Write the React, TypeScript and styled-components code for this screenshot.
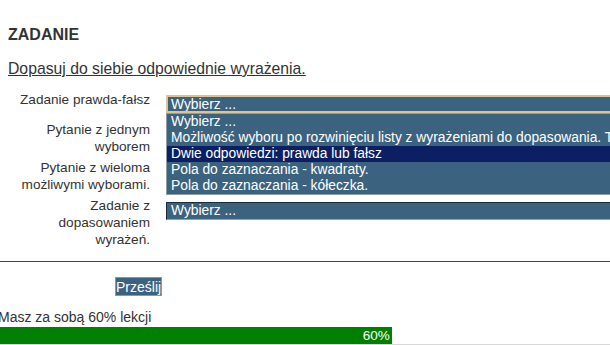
import React from "react";
import styled, { createGlobalStyle } from "styled-components";

const GlobalStyle = createGlobalStyle`
  html, body {
    margin: 0;
    padding: 0;
    background: #ffffff;
    overflow: hidden;
  }
  body {
    font-family: "Liberation Sans", Arial, sans-serif;
    color: #333333;
  }
`;

const Page = styled.div`
  width: 610px;
  padding: 26px 0 0 8px;
  box-sizing: border-box;
`;

const Title = styled.h3`
  margin: 0;
  font-size: 16px;
  line-height: 18px;
  font-weight: bold;
  color: #333333;
`;

const Instruction = styled.p`
  margin: 16px 0 0 0;
  font-size: 15.75px;
  line-height: 18px;
  text-decoration: underline;
  color: #333333;
`;

const Form = styled.div`
  margin-top: 13px;
  display: flex;
  flex-direction: column;
  gap: 4px;
`;

const Row = styled.div`
  display: grid;
  grid-template-columns: 142px 1fr;
  column-gap: 16px;
  align-items: start;
`;

const Label = styled.div`
  text-align: right;
  font-size: 13.6px;
  line-height: 17px;
  color: #333333;
`;

const SelectWrap = styled.div<{ $top: number }>`
  position: relative;
  margin-top: ${(p) => p.$top}px;
  margin-bottom: 4px;
  width: 470px;
`;

const SelectBox = styled.div<{ $focused?: boolean }>`
  height: 18px;
  box-sizing: border-box;
  background: #3b6380;
  color: #ffffff;
  font-size: 13.8px;
  line-height: 15px;
  white-space: nowrap;
  overflow: hidden;
  padding-left: ${(p) => (p.$focused ? 3 : 4)}px;
  border-style: solid;
  border-width: ${(p) => (p.$focused ? 2 : 1)}px;
  border-color: ${(p) =>
    p.$focused ? "#e0c28c" : "#1c2b36 #8fa1ae #8fa1ae #1c2b36"};
`;

const ListBox = styled.div`
  position: absolute;
  left: 0;
  top: 100%;
  width: 470px;
  box-sizing: border-box;
  background: #3b6380;
  border: 1px solid #8d9ca7;
  z-index: 2;
`;

const Option = styled.div<{ $selected?: boolean }>`
  height: 16px;
  line-height: 16px;
  padding-left: 4px;
  font-size: 13.8px;
  color: #ffffff;
  white-space: nowrap;
  background: ${(p) => (p.$selected ? "#0b1f62" : "transparent")};
`;

const Divider = styled.div`
  margin: 13px 0 0 -8px;
  width: 610px;
  height: 1px;
  background: #444444;
`;

const SubmitButton = styled.button`
  display: block;
  margin: 15px 0 0 107px;
  height: 19px;
  width: 47px;
  padding: 0;
  box-sizing: border-box;
  background: #3b6380;
  color: #ffffff;
  border: 1px solid #8a979f;
  font-family: "Liberation Sans", Arial, sans-serif;
  font-size: 14px;
  line-height: 16px;
  cursor: pointer;
`;

const ProgressText = styled.div`
  margin: 13px 0 0 -10px;
  font-size: 14px;
  line-height: 17px;
  color: #333333;
  white-space: nowrap;
`;

const Track = styled.div`
  margin: 1px 0 0 -8px;
  width: 653px;
  height: 18px;
  box-sizing: border-box;
  border-bottom: 1px solid #d8d8d8;
`;

const Fill = styled.div`
  height: 17px;
  background: #008000;
  color: #ffffff;
  font-size: 13.5px;
  line-height: 17px;
  text-align: right;
  padding-right: 2px;
  box-sizing: border-box;
`;

const options = [
  "Wybierz ...",
  "Możliwość wyboru po rozwinięciu listy z wyrażeniami do dopasowania. Tak",
  "Dwie odpowiedzi: prawda lub fałsz",
  "Pola do zaznaczania - kwadraty.",
  "Pola do zaznaczania - kółeczka.",
];

export default function App() {
  const percent = 60;
  return (
    <>
      <GlobalStyle />
      <Page>
        <Title>ZADANIE</Title>
        <Instruction>Dopasuj do siebie odpowiednie wyrażenia.</Instruction>
        <Form>
          <Row>
            <Label>Zadanie prawda-fałsz</Label>
            <SelectWrap $top={4}>
              <SelectBox $focused>Wybierz ...</SelectBox>
              <ListBox>
                {options.map((o, i) => (
                  <Option key={i} $selected={i === 2}>
                    {o}
                  </Option>
                ))}
              </ListBox>
            </SelectWrap>
          </Row>
          <Row>
            <Label>
              Pytanie z jednym
              <br />
              wyborem
            </Label>
            <SelectWrap $top={8}>
              <SelectBox>Wybierz ...</SelectBox>
            </SelectWrap>
          </Row>
          <Row>
            <Label>
              Pytanie z wieloma
              <br />
              możliwymi wyborami.
            </Label>
            <SelectWrap $top={8}>
              <SelectBox>Wybierz ...</SelectBox>
            </SelectWrap>
          </Row>
          <Row>
            <Label>
              Zadanie z
              <br />
              dopasowaniem
              <br />
              wyrażeń.
            </Label>
            <SelectWrap $top={5}>
              <SelectBox>Wybierz ...</SelectBox>
            </SelectWrap>
          </Row>
        </Form>
        <Divider />
        <SubmitButton type="button">Prześlij</SubmitButton>
        <ProgressText>Masz za sobą {percent}% lekcji</ProgressText>
        <Track>
          <Fill style={{ width: `${percent}%` }}>{percent}%</Fill>
        </Track>
      </Page>
    </>
  );
}
